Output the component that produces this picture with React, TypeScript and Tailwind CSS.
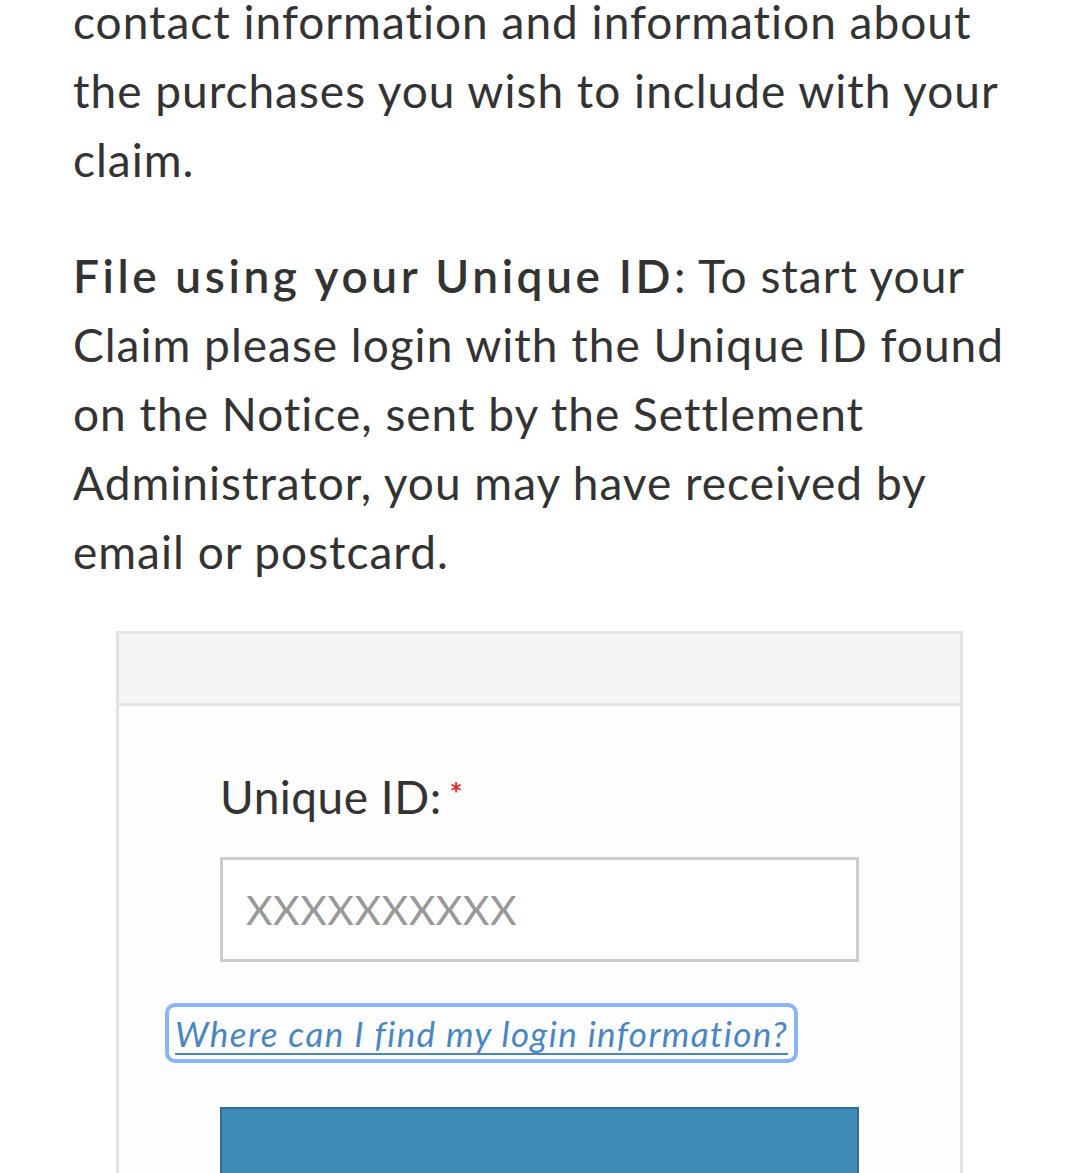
import React from "react";

export default function App() {
  return (
    <div className="min-h-[1173px] overflow-hidden bg-white px-[73px] text-[#333] [font-family:Lato,'Open_Sans',sans-serif]">
      <p className="-mt-[13px] whitespace-nowrap text-[46px] leading-[69px] tracking-[1px]">
        contact information and information about
        <br />
        the purchases you wish to include with your
        <br />
        claim.
      </p>
      <p className="mt-[47px] whitespace-nowrap text-[46px] leading-[69px] tracking-[1px]">
        <span className="font-semibold tracking-[3.6px]">File using your Unique ID</span>: To start your
        <br />
        Claim please login with the Unique ID found
        <br />
        on the Notice, sent by the Settlement
        <br />
        Administrator, you may have received by
        <br />
        email or postcard.
      </p>
      <div className="ml-[43px] mt-[45px] w-[847px] border-[3px] border-[#e3e3e3]">
        <div className="h-[72px] border-b-[3px] border-[#e3e3e3] bg-[#f5f5f5]" />
        <div className="bg-[#fdfdfd] px-[101px] pt-[56px] pb-[40px]">
          <label className="block text-[46px] leading-[69px] tracking-[0.5px]">
            Unique ID:<span className="relative -top-[9px] ml-[8px] align-baseline text-[30px] font-bold text-[#d8322c]">*</span>
          </label>
          <div className="mt-[20px] flex h-[105px] items-center border-[3px] border-[#cccccc] bg-white pl-[23px] text-[41px] tracking-[0.5px] text-[#999]">
            XXXXXXXXXX
          </div>
          <div className="mt-[45px] -ml-[51px]">
            <a
              href="#"
              className="inline-block rounded-[6px] px-[6px] text-[35px] italic leading-[52px] tracking-[1.4px] text-[#4a86c0] underline decoration-[2px] underline-offset-[6px] outline outline-[4px] outline-[#8ab4f8]"
            >
              Where can I find my login information?
            </a>
          </div>
          <div className="mt-[48px] h-[120px] border-[2px] border-[#2f6e97] bg-[#3e8ab7]" />
        </div>
      </div>
    </div>
  );
}
